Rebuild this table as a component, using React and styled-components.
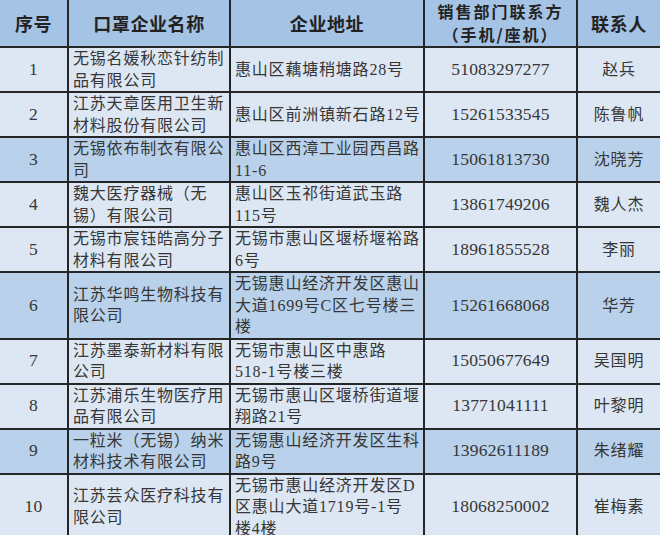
import React from 'react'
import styled, { createGlobalStyle } from 'styled-components'

const GlobalStyle = createGlobalStyle`
  html, body {
    margin: 0;
    padding: 0;
    background: #ffffff;
  }
`

const Table = styled.table`
  width: 660px;
  border-collapse: collapse;
  table-layout: fixed;
  font-family: "Liberation Serif", "Noto Sans CJK SC", serif;
  color: #363636;
`

const HeadCell = styled.th`
  height: 46px;
  padding: 0;
  background: #a5c3e4;
  border: 2px solid #262626;
  border-top: none;
  font-family: "Noto Sans CJK SC", sans-serif;
  font-weight: 700;
  font-size: ${p => p.$twoLine ? 16 : 18}px;
  letter-spacing: ${p => p.$twoLine ? 2 : 0.6}px;
  line-height: 23px;
  color: #222;
  text-align: center;
  vertical-align: middle;
  &:first-child { border-left: none; }
  &:last-child { border-right: none; }
`

const Row = styled.tr`
  height: ${p => p.$tall ? 64 : 44}px;
  background: ${p => p.$dark ? '#b9d1ea' : '#dde7f3'};
`

const Cell = styled.td`
  padding: 0 0 0 ${p => p.$align === 'left' ? 4 : 0}px;
  border: 2px solid #262626;
  font-size: 16px;
  letter-spacing: 0.8px;
  line-height: 21.5px;
  text-align: ${p => p.$align || 'center'};
  vertical-align: middle;
  white-space: nowrap;
  overflow: hidden;
  &:first-child { border-left: none; }
  &:last-child { border-right: none; }
`

const Num = styled.span`
  font-size: 17.5px;
  letter-spacing: 0.2px;
`

const rows = [
  ['1', ['无锡名媛秋恋针纺制', '品有限公司'], ['惠山区藕塘稍塘路28号'], '51083297277', '赵兵'],
  ['2', ['江苏天章医用卫生新', '材料股份有限公司'], ['惠山区前洲镇新石路12号'], '15261533545', '陈鲁帆'],
  ['3', ['无锡依布制衣有限公', '司'], ['惠山区西漳工业园西昌路', '11-6'], '15061813730', '沈晓芳'],
  ['4', ['魏大医疗器械（无', '锡）有限公司'], ['惠山区玉祁街道武玉路', '115号'], '13861749206', '魏人杰'],
  ['5', ['无锡市宸钰皓高分子', '材料有限公司'], ['无锡市惠山区堰桥堰裕路', '6号'], '18961855528', '李丽'],
  ['6', ['江苏华鸣生物科技有', '限公司'], ['无锡惠山经济开发区惠山', '大道1699号C区七号楼三', '楼'], '15261668068', '华芳'],
  ['7', ['江苏墨泰新材料有限', '公司'], ['无锡市惠山区中惠路', '518-1号楼三楼'], '15050677649', '吴国明'],
  ['8', ['江苏浦乐生物医疗用', '品有限公司'], ['无锡市惠山区堰桥街道堰', '翔路21号'], '13771041111', '叶黎明'],
  ['9', ['一粒米（无锡）纳米', '材料技术有限公司'], ['无锡惠山经济开发区生科', '路9号'], '13962611189', '朱绪耀'],
  ['10', ['江苏芸众医疗科技有', '限公司'], ['无锡市惠山经济开发区D', '区惠山大道1719号-1号', '楼4楼'], '18068250002', '崔梅素'],
]

function Lines({ items }) {
  return items.map((t, i) => (
    <React.Fragment key={i}>
      {i > 0 && <br />}
      {t}
    </React.Fragment>
  ))
}

export default function App() {
  return (
    <>
      <GlobalStyle />
      <Table>
        <colgroup>
          <col style={{ width: 68 }} />
          <col style={{ width: 162 }} />
          <col style={{ width: 194 }} />
          <col style={{ width: 153 }} />
          <col style={{ width: 83 }} />
        </colgroup>
        <thead>
          <tr>
            <HeadCell>序号</HeadCell>
            <HeadCell>口罩企业名称</HeadCell>
            <HeadCell>企业地址</HeadCell>
            <HeadCell $twoLine>销售部门联系方<br />（手机/座机）</HeadCell>
            <HeadCell>联系人</HeadCell>
          </tr>
        </thead>
        <tbody>
          {rows.map((r, i) => (
            <Row key={r[0]} $dark={i % 3 === 2} $tall={r[2].length > 2}>
              <Cell><Num>{r[0]}</Num></Cell>
              <Cell $align="left"><Lines items={r[1]} /></Cell>
              <Cell $align="left"><Lines items={r[2]} /></Cell>
              <Cell><Num>{r[3]}</Num></Cell>
              <Cell>{r[4]}</Cell>
            </Row>
          ))}
        </tbody>
      </Table>
    </>
  )
}
